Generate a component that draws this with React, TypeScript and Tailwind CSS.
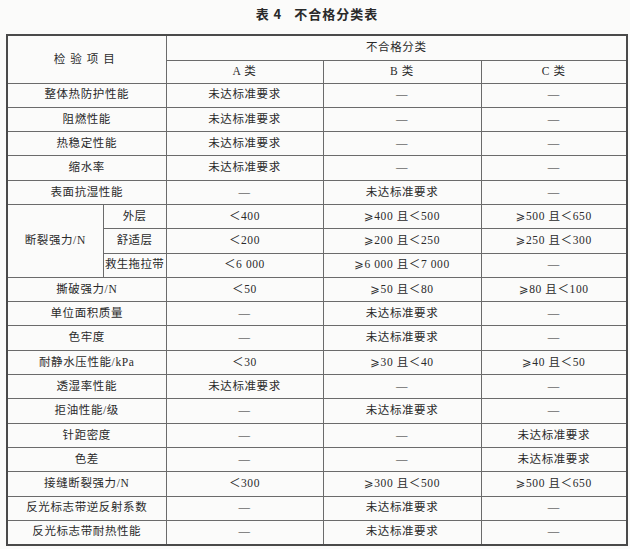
const D = "—";
const NG = "未达标准要求";

type Row = { label: string; a: string; b: string; c: string };

const before: Row[] = [
  { label: "整体热防护性能", a: NG, b: D, c: D },
  { label: "阻燃性能", a: NG, b: D, c: D },
  { label: "热稳定性能", a: NG, b: D, c: D },
  { label: "缩水率", a: NG, b: D, c: D },
  { label: "表面抗湿性能", a: D, b: NG, c: D },
];

const tensile: Row[] = [
  { label: "外层", a: "＜400", b: "⩾400 且＜500", c: "⩾500 且＜650" },
  { label: "舒适层", a: "＜200", b: "⩾200 且＜250", c: "⩾250 且＜300" },
  { label: "救生拖拉带", a: "＜6 000", b: "⩾6 000 且＜7 000", c: D },
];

const after: Row[] = [
  { label: "撕破强力/N", a: "＜50", b: "⩾50 且＜80", c: "⩾80 且＜100" },
  { label: "单位面积质量", a: D, b: NG, c: D },
  { label: "色牢度", a: D, b: NG, c: D },
  { label: "耐静水压性能/kPa", a: "＜30", b: "⩾30 且＜40", c: "⩾40 且＜50" },
  { label: "透湿率性能", a: NG, b: D, c: D },
  { label: "拒油性能/级", a: D, b: NG, c: D },
  { label: "针距密度", a: D, b: D, c: NG },
  { label: "色差", a: D, b: D, c: NG },
  { label: "接缝断裂强力/N", a: "＜300", b: "⩾300 且＜500", c: "⩾500 且＜650" },
  { label: "反光标志带逆反射系数", a: D, b: NG, c: D },
  { label: "反光标志带耐热性能", a: D, b: NG, c: D },
];

const cell = "border border-[#6b6b6b] p-0 text-center align-middle font-normal";

function Values({ r }: { r: Row }) {
  return (
    <>
      <td className={cell}>{r.a}</td>
      <td className={cell}>{r.b}</td>
      <td className={cell}>{r.c}</td>
    </>
  );
}

export default function App() {
  return (
    <div
      className="h-[549px] w-[630px] bg-[#fbfbfa] text-[#2a2a2a]"
      style={{ fontFamily: '"Liberation Serif", "Noto Sans CJK SC", "DejaVu Sans", serif' }}
    >
      <div
        className="flex h-[34px] items-start justify-center pl-[4px] pt-[5px] text-[13px] font-bold leading-[17px] tracking-[1px]"
        style={{ fontFamily: '"Noto Sans CJK SC", sans-serif' }}
      >
        <span>表 4</span>
        <span className="ml-[12px]">不合格分类表</span>
      </div>
      <table className="ml-[6px] w-[620px] table-fixed border-collapse border-2 border-[#4a4a4a] text-[11.5px] leading-none tracking-[0.6px]">
        <colgroup>
          <col className="w-[96px]" />
          <col className="w-[63px]" />
          <col className="w-[157px]" />
          <col className="w-[158px]" />
          <col className="w-[146px]" />
        </colgroup>
        <thead>
          <tr className="h-[25px]">
            <th colSpan={2} rowSpan={2} className={`${cell} tracking-[5px]`}>
              检验项目
            </th>
            <th colSpan={3} className={cell}>
              不合格分类
            </th>
          </tr>
          <tr className="h-[23px]">
            <th className={cell}>A 类</th>
            <th className={cell}>B 类</th>
            <th className={cell}>C 类</th>
          </tr>
        </thead>
        <tbody>
          {before.map((r) => (
            <tr key={r.label} className="h-[24.3px]">
              <td colSpan={2} className={cell}>
                {r.label}
              </td>
              <Values r={r} />
            </tr>
          ))}
          {tensile.map((r, i) => (
            <tr key={r.label} className="h-[24.3px]">
              {i === 0 && (
                <td rowSpan={3} className={cell}>
                  断裂强力/N
                </td>
              )}
              <td className={`${cell} tracking-[0.3px]`}>{r.label}</td>
              <Values r={r} />
            </tr>
          ))}
          {after.map((r) => (
            <tr key={r.label} className="h-[24.3px]">
              <td colSpan={2} className={cell}>
                {r.label}
              </td>
              <Values r={r} />
            </tr>
          ))}
        </tbody>
      </table>
    </div>
  );
}
